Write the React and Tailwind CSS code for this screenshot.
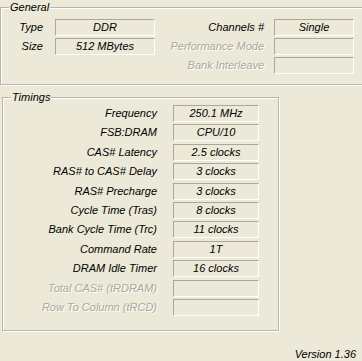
import React from 'react';

const general = [
  { label: 'Type', value: 'DDR' },
  { label: 'Size', value: '512 MBytes' },
];

const generalRight = [
  { label: 'Channels #', value: 'Single' },
  { label: 'Performance Mode', value: '', disabled: true },
  { label: 'Bank Interleave', value: '', disabled: true },
];

const timings = [
  { label: 'Frequency', value: '250.1 MHz' },
  { label: 'FSB:DRAM', value: 'CPU/10' },
  { label: 'CAS# Latency', value: '2.5 clocks' },
  { label: 'RAS# to CAS# Delay', value: '3 clocks' },
  { label: 'RAS# Precharge', value: '3 clocks' },
  { label: 'Cycle Time (Tras)', value: '8 clocks' },
  { label: 'Bank Cycle Time (Trc)', value: '11 clocks' },
  { label: 'Command Rate', value: '1T' },
  { label: 'DRAM Idle Timer', value: '16 clocks' },
  { label: 'Total CAS# (tRDRAM)', value: '', disabled: true },
  { label: 'Row To Column (tRCD)', value: '', disabled: true },
];

function Label({ children, disabled }) {
  return (
    <span
      className={`text-right whitespace-nowrap leading-[17px] ${
        disabled ? 'text-[#aca899] [text-shadow:1px_1px_0_#ffffff]' : 'text-black'
      }`}
    >
      {children}
    </span>
  );
}

function Field({ value, width }) {
  return (
    <div
      className={`${width} h-[17px] border border-t-[#aca899] border-l-[#aca899] border-b-white border-r-white flex items-center justify-center leading-[15px] text-black whitespace-nowrap`}
    >
      {value}
    </div>
  );
}

function Group({ title, className, children }) {
  return (
    <div
      className={`relative border border-[#b8b5a6] shadow-[1px_1px_0_#ffffff,inset_1px_1px_0_#ffffff] ${className}`}
    >
      <span className="absolute left-[8px] -top-[7px] px-[1px] leading-[13px] bg-[#ece9d8] text-black">
        {title}
      </span>
      {children}
    </div>
  );
}

export default function App() {
  return (
    <div className="w-[362px] h-[361px] overflow-hidden bg-[#ece9d8] font-['Liberation_Sans',Arial,sans-serif] italic text-[11px] flex flex-col">
      {/* General */}
      <Group title="General" className="mt-[7px] w-[380px] h-[78px] shrink-0">
        <div className="flex items-start pt-[11px]">
          <div className="grid grid-cols-[42px_100px] gap-x-[12px] gap-y-[2px] content-start">
            {general.map((row) => (
              <React.Fragment key={row.label}>
                <Label>{row.label}</Label>
                <Field value={row.value} width="w-[100px]" />
              </React.Fragment>
            ))}
          </div>
          <div className="grid grid-cols-[109px_80px] gap-x-[10px] gap-y-[2px] content-start">
            {generalRight.map((row) => (
              <React.Fragment key={row.label}>
                <Label disabled={row.disabled}>{row.label}</Label>
                <Field value={row.value} width="w-[80px]" />
              </React.Fragment>
            ))}
          </div>
        </div>
      </Group>

      {/* Timings */}
      <Group title="Timings" className="mt-[12px] ml-[2px] w-[277px] h-[234px] shrink-0">
        <div className="grid grid-cols-[154px_86px] gap-x-[16px] gap-y-[2.4px] pt-[7px]">
          {timings.map((row) => (
            <React.Fragment key={row.label}>
              <Label disabled={row.disabled}>{row.label}</Label>
              <Field value={row.value} width="w-[86px]" />
            </React.Fragment>
          ))}
        </div>
      </Group>

      <div className="flex justify-end pr-[6px] mt-[17px] leading-[13px] text-black">
        Version 1.36
      </div>
    </div>
  );
}
